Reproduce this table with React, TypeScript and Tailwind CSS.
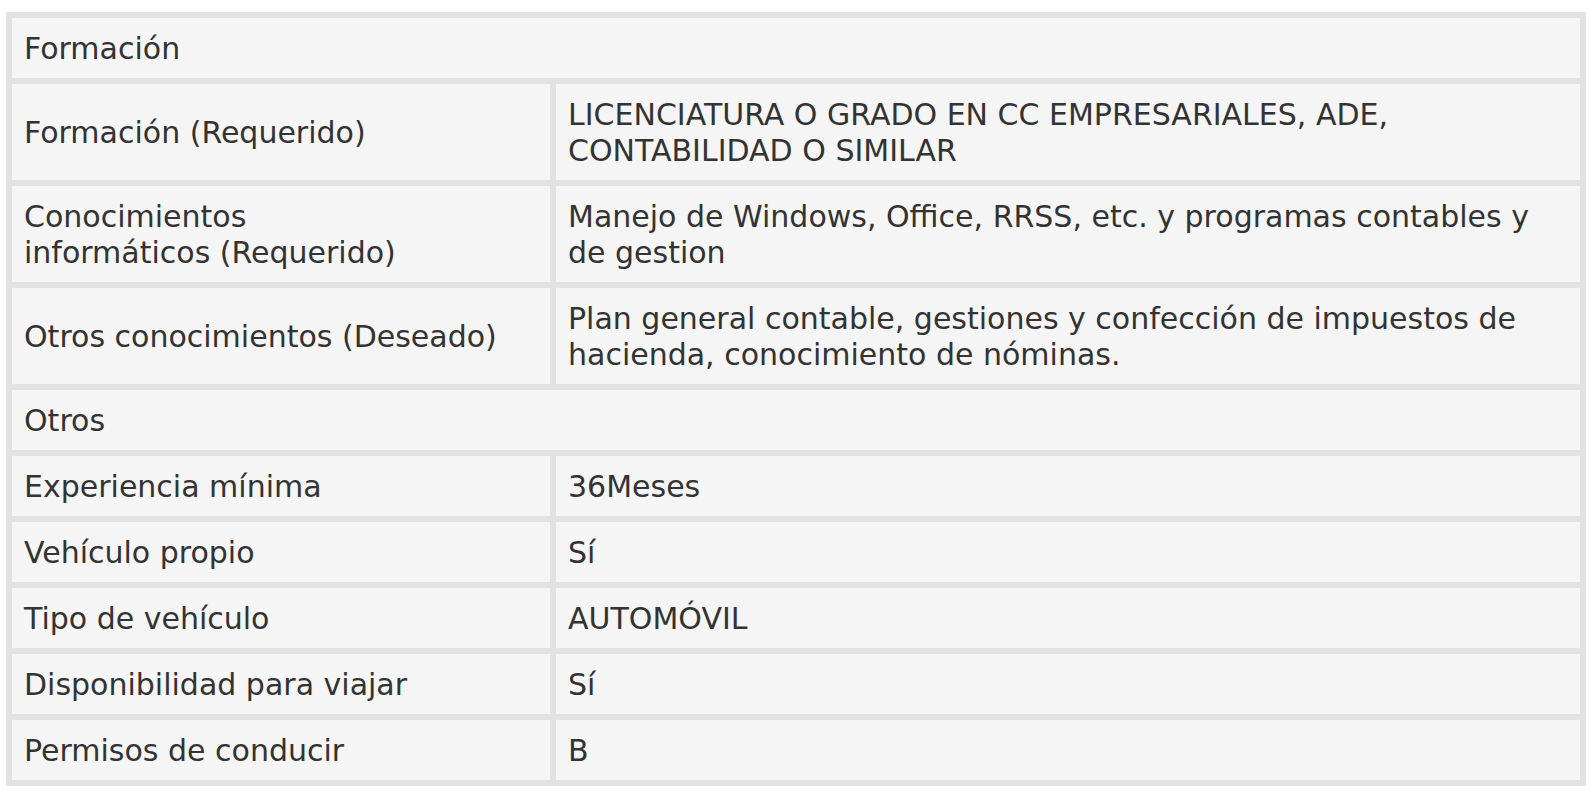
import type { ReactNode } from "react";

type Row =
  | { kind: "section"; title: string }
  | { kind: "field"; label: ReactNode; value: ReactNode };

const rows: Row[] = [
  { kind: "section", title: "Formación" },
  {
    kind: "field",
    label: "Formación (Requerido)",
    value: (
      <>
        LICENCIATURA O GRADO EN CC EMPRESARIALES, ADE,
        <br />
        CONTABILIDAD O SIMILAR
      </>
    ),
  },
  {
    kind: "field",
    label: (
      <>
        Conocimientos
        <br />
        informáticos (Requerido)
      </>
    ),
    value: (
      <>
        Manejo de Windows, Office, RRSS, etc. y programas contables y
        <br />
        de gestion
      </>
    ),
  },
  {
    kind: "field",
    label: "Otros conocimientos (Deseado)",
    value: (
      <>
        Plan general contable, gestiones y confección de impuestos de
        <br />
        hacienda, conocimiento de nóminas.
      </>
    ),
  },
  { kind: "section", title: "Otros" },
  { kind: "field", label: "Experiencia mínima", value: "36Meses" },
  { kind: "field", label: "Vehículo propio", value: "Sí" },
  { kind: "field", label: "Tipo de vehículo", value: "AUTOMÓVIL" },
  { kind: "field", label: "Disponibilidad para viajar", value: "Sí" },
  { kind: "field", label: "Permisos de conducir", value: "B" },
];

export default function App() {
  return (
    <div className="min-h-screen bg-white px-[6px] pt-[12px] font-['DejaVu_Sans',Verdana,sans-serif] text-[30px] leading-[36px] text-[#333333]">
      <div className="grid w-[1580px] grid-cols-[538px_1fr] gap-[6px] bg-[#e2e2e2] p-[6px]">
        {rows.map((r, i) =>
          r.kind === "section" ? (
            <div key={i} className="col-span-2 bg-[#f5f5f5] px-[12px] pt-[13px] pb-[11px]">
              {r.title}
            </div>
          ) : (
            <Field key={i} label={r.label} value={r.value} />
          ),
        )}
      </div>
    </div>
  );
}

function Field({ label, value }: { label: ReactNode; value: ReactNode }) {
  return (
    <>
      <div className="flex items-center bg-[#f5f5f5] px-[12px] pt-[13px] pb-[11px]">
        <span className="whitespace-nowrap">{label}</span>
      </div>
      <div className="flex items-center bg-[#f5f5f5] px-[12px] pt-[13px] pb-[11px]">
        <span className="whitespace-nowrap">{value}</span>
      </div>
    </>
  );
}
